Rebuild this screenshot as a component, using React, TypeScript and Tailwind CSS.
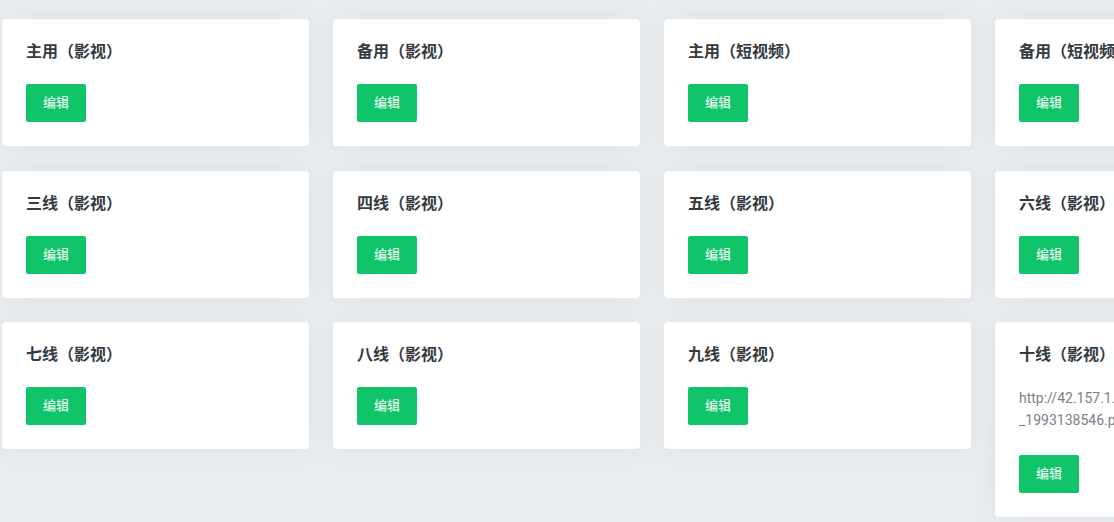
const cards: { title: string; url?: string[] }[] = [
  { title: '主用（影视）' },
  { title: '备用（影视）' },
  { title: '主用（短视频）' },
  { title: '备用（短视频）' },
  { title: '三线（影视）' },
  { title: '四线（影视）' },
  { title: '五线（影视）' },
  { title: '六线（影视）' },
  { title: '七线（影视）' },
  { title: '八线（影视）' },
  { title: '九线（影视）' },
  { title: '十线（影视）', url: ['http://42.157.1.35:9878/api/tvbox/config', '_1993138546.php'] },
];

function SourceCard({ title, url }: { title: string; url?: string[] }) {
  return (
    <div className="rounded-[4px] bg-white p-6 shadow-[0_0_24px_rgba(154,161,171,0.12)]">
      <h5 className="mb-6 text-[16px] leading-[17px] font-bold text-[#343a40]">{title}</h5>
      {url ? (
        <p className="mb-6 text-[14px] leading-[22px] whitespace-nowrap text-[#7a828c]">
          {url.map((line) => (
            <span key={line} className="block">
              {line}
            </span>
          ))}
        </p>
      ) : null}
      <button
        type="button"
        className="h-[38px] w-[60px] rounded-[2px] bg-[#10c469] text-[13px] text-white"
      >
        编辑
      </button>
    </div>
  );
}

export default function App() {
  return (
    <div className="h-[522px] w-[1114px] overflow-hidden bg-[#e9ecef] font-['Roboto','Noto_Sans_CJK_SC',sans-serif]">
      <div className="ml-[2px] grid w-[1300px] grid-cols-[307px_307px_307px_307px] items-start gap-x-6 gap-y-[24.5px] pt-[19px]">
        {cards.map((c) => (
          <SourceCard key={c.title} title={c.title} url={c.url} />
        ))}
      </div>
    </div>
  );
}
